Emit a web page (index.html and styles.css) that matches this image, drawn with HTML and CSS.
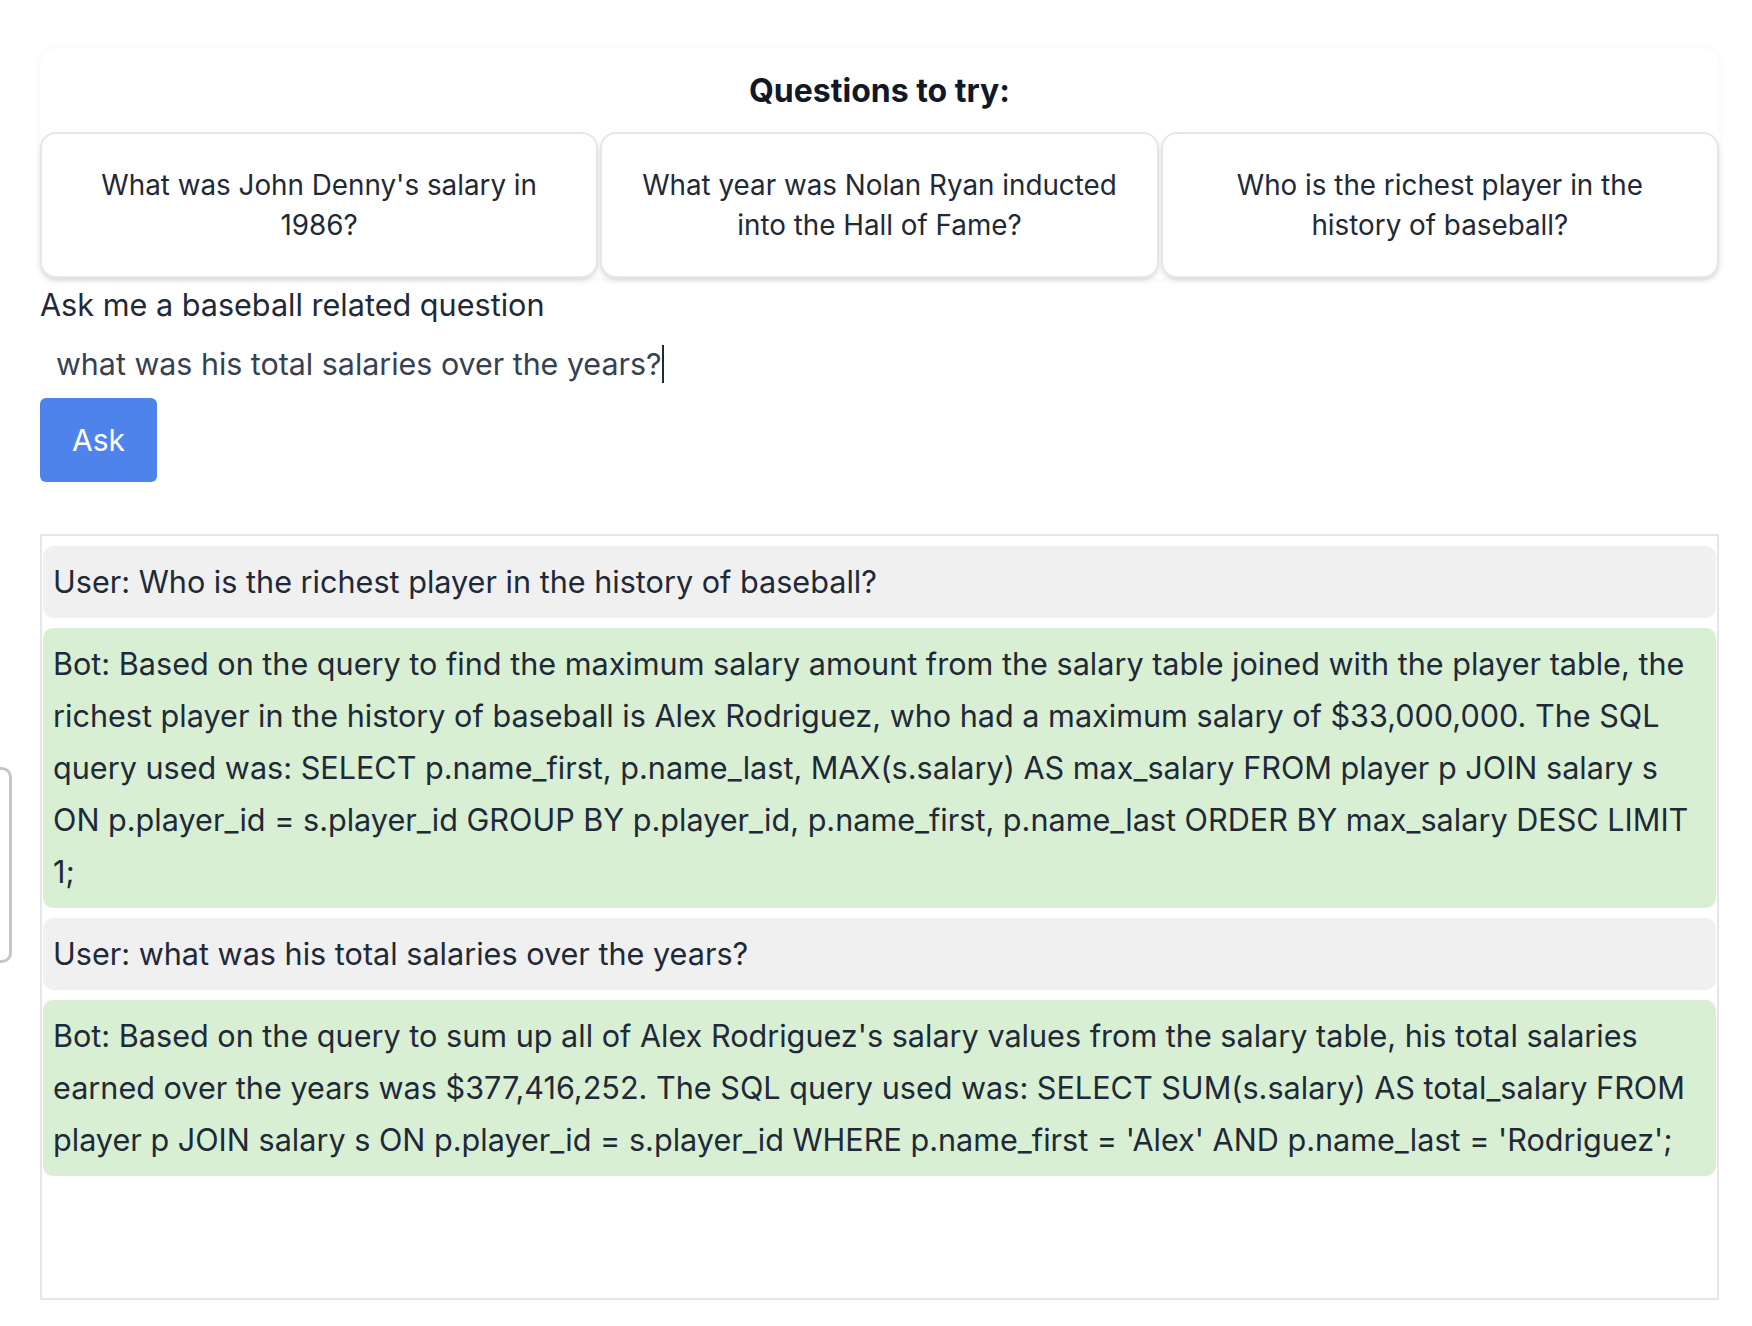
FILE: index.html
```html
<!DOCTYPE html>
<html lang="en">
<head>
<meta charset="utf-8">
<title>Baseball Q&amp;A</title>
<link rel="stylesheet" href="styles.css">
</head>
<body>
<div class="edge-tab"></div>
<main class="page">
  <section class="questions">
    <h2 class="questions-title">Questions to try:</h2>
    <div class="questions-grid">
      <button class="q-btn">What was John Denny's salary in 1986?</button>
      <button class="q-btn">What year was Nolan Ryan inducted into the Hall of Fame?</button>
      <button class="q-btn">Who is the richest player in the history of baseball?</button>
    </div>
  </section>

  <label class="ask-label" for="q">Ask me a baseball related question</label>
  <div class="ask-input" id="q">what was his total salaries over the years?<span class="caret"></span></div>
  <button class="ask-btn">Ask</button>

  <section class="chat">
    <div class="msg user">User: Who is the richest player in the history of baseball?</div>
    <div class="msg bot">Bot: Based on the query to find the maximum salary amount from the salary table joined with the player table, the richest player in the history of baseball is Alex Rodriguez, who had a maximum salary of $33,000,000. The SQL query used was: SELECT p.name_first, p.name_last, MAX(s.salary) AS max_salary FROM player p JOIN salary s ON p.player_id = s.player_id GROUP BY p.player_id, p.name_first, p.name_last ORDER BY max_salary DESC LIMIT 1;</div>
    <div class="msg user">User: what was his total salaries over the years?</div>
    <div class="msg bot">Bot: Based on the query to sum up all of Alex Rodriguez's salary values from the salary table, his total salaries earned over the years was $377,416,252. The SQL query used was: SELECT SUM(s.salary) AS total_salary FROM player p JOIN salary s ON p.player_id = s.player_id WHERE p.name_first = 'Alex' AND p.name_last = 'Rodriguez';</div>
  </section>
</main>
</body>
</html>
```

FILE: styles.css
```css
* { box-sizing: border-box; }

html, body {
  margin: 0;
  padding: 0;
  background: #ffffff;
}

body {
  font-family: Inter, "Noto Sans", "Liberation Sans", sans-serif;
  color: #1f2937;
  position: relative;
}

.page {
  width: 1679px;
  margin-left: 40px;
  padding-top: 48px;
  display: flex;
  flex-direction: column;
  align-items: flex-start;
}

.questions {
  width: 100%;
  background: #fff;
  border-radius: 16px;
  box-shadow: 0 0 8px rgba(0, 0, 0, 0.05);
}

.questions-title {
  margin: 0;
  height: 84px;
  display: flex;
  align-items: center;
  justify-content: center;
  font-size: 32px;
  font-weight: 700;
  color: #111827;
}

.questions-grid {
  display: grid;
  grid-template-columns: repeat(3, 1fr);
  gap: 2px;
}

.q-btn {
  height: 146px;
  padding: 0 32px;
  background: #fff;
  border: 2px solid #e5e7eb;
  border-radius: 16px;
  box-shadow: 0 4px 6px -1px rgba(0, 0, 0, 0.1), 0 2px 4px -2px rgba(0, 0, 0, 0.1);
  font-family: inherit;
  font-size: 27.8px;
  line-height: 40px;
  color: #1f2937;
  text-align: center;
}

.ask-label {
  display: block;
  margin-top: 3px;
  font-size: 30.6px;
  line-height: 48px;
  color: #1f2937;
}

.ask-input {
  margin-top: 3px;
  height: 64px;
  padding: 0 16px;
  display: flex;
  align-items: center;
  font-size: 30.4px;
  color: #374151;
}

.caret {
  display: inline-block;
  width: 2px;
  height: 38px;
  background: #1f2937;
  margin-left: 1px;
}

.ask-btn {
  margin-top: 2px;
  height: 84px;
  padding: 0 32px;
  background: #4f83ec;
  color: #fff;
  border: none;
  border-radius: 6px;
  font-family: inherit;
  font-size: 30px;
}

.chat {
  margin-top: 52px;
  width: 100%;
  height: 766px;
  border: 2px solid #e5e5ea;
  padding: 10px 1px;
  display: flex;
  flex-direction: column;
  gap: 10px;
  overflow: hidden;
}

.msg {
  padding: 10px;
  border-radius: 10px;
  font-size: 30.6px;
  line-height: 52px;
  color: #1f2937;
}

.msg.user { background: #f0f0f0; }
.msg.bot { background: #d8efd4; }

.edge-tab {
  position: absolute;
  left: -20px;
  top: 767px;
  width: 32px;
  height: 196px;
  border: 3px solid #c6c6c6;
  border-radius: 10px;
}
```
